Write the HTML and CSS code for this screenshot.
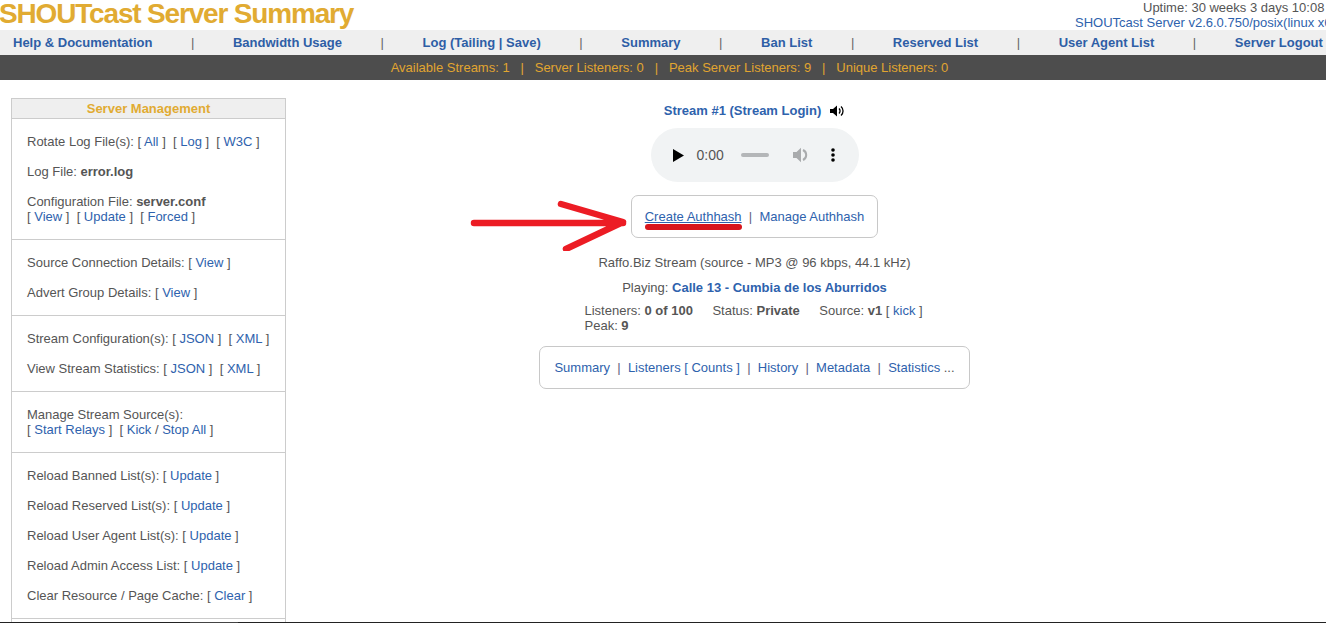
FILE: index.html
```html
<!DOCTYPE html>
<html lang="en">
<head>
<meta charset="utf-8">
<title>SHOUTcast Server Summary</title>
<link rel="stylesheet" href="styles.css">
</head>
<body>
<header class="top">
  <h1 class="title">SHOUTcast Server Summary</h1>
  <div class="meta">
    <div class="uptime">Uptime: 30 weeks 3 days 10:08</div>
    <div class="ver">SHOUTcast Server v2.6.0.750/posix(linux x64)</div>
  </div>
</header>
<nav class="nav">
  <a>Help &amp; Documentation</a><i>|</i>
  <a>Bandwidth Usage</a><i>|</i>
  <a>Log (Tailing | Save)</a><i>|</i>
  <a>Summary</a><i>|</i>
  <a>Ban List</a><i>|</i>
  <a>Reserved List</a><i>|</i>
  <a>User Agent List</a><i>|</i>
  <a>Server Logout</a>
</nav>
<div class="stats">Available Streams: 1 &nbsp;&nbsp;<b>|</b> &nbsp;&nbsp;Server Listeners: 0 &nbsp;&nbsp;<b>|</b> &nbsp;&nbsp;Peak Server Listeners: 9 &nbsp;&nbsp;<b>|</b> &nbsp;&nbsp;Unique Listeners: 0</div>
<div class="main">
  <aside class="side">
    <div class="side-head">Server Management</div>
    <section class="group">
      <p>Rotate Log File(s): [ <a>All</a> ] &nbsp;[ <a>Log</a> ] &nbsp;[ <a>W3C</a> ]</p>
      <p>Log File: <b>error.log</b></p>
      <p>Configuration File: <b>server.conf</b><br>[ <a>View</a> ] &nbsp;[ <a>Update</a> ] &nbsp;[ <a>Forced</a> ]</p>
    </section>
    <section class="group">
      <p>Source Connection Details: [ <a>View</a> ]</p>
      <p>Advert Group Details: [ <a>View</a> ]</p>
    </section>
    <section class="group">
      <p>Stream Configuration(s): [ <a>JSON</a> ] &nbsp;[ <a>XML</a> ]</p>
      <p>View Stream Statistics: [ <a>JSON</a> ] &nbsp;[ <a>XML</a> ]</p>
    </section>
    <section class="group">
      <p>Manage Stream Source(s):<br>[ <a>Start Relays</a> ] &nbsp;[ <a>Kick</a> / <a>Stop All</a> ]</p>
    </section>
    <section class="group">
      <p>Reload Banned List(s): [ <a>Update</a> ]</p>
      <p>Reload Reserved List(s): [ <a>Update</a> ]</p>
      <p>Reload User Agent List(s): [ <a>Update</a> ]</p>
      <p>Reload Admin Access List: [ <a>Update</a> ]</p>
      <p>Clear Resource / Page Cache: [ <a>Clear</a> ]</p>
    </section>
  </aside>
  <main class="center">
    <div class="stream-title"><a>Stream #1 (Stream Login)</a>
      <svg class="spk" width="15" height="12" viewBox="0 0 15 12"><path d="M0 4h3l4-3.500v11L3 8H0z" fill="#000"/><path d="M9 3.500a3.500 3.500 0 0 1 0 5M11 1.500a6 6 0 0 1 0 9" fill="none" stroke="#000" stroke-width="1.300"/></svg>
    </div>
    <div class="player">
      <svg class="play" width="11" height="13" viewBox="0 0 11 13"><path d="M0 0l11 6.500L0 13z" fill="#000"/></svg>
      <span class="time">0:00</span>
      <span class="track"></span>
      <svg class="vol" width="16" height="16" viewBox="0 0 16 16"><path d="M0 5h3.500L8 .8v14.400L3.500 11H0z" fill="#a9abad"/><path d="M10 3a5.500 5.500 0 0 1 0 10" fill="none" stroke="#a9abad" stroke-width="2"/></svg>
      <svg class="dots" width="4" height="14" viewBox="0 0 4 14"><circle cx="2" cy="2" r="1.800"/><circle cx="2" cy="7" r="1.800"/><circle cx="2" cy="12" r="1.800"/></svg>
    </div>
    <div class="box auth-box">
      <span class="box-text"><a class="marked">Create Authhash</a> &nbsp;<i>|</i> &nbsp;<a>Manage Authhash</a></span>
      <svg class="arrow" width="160" height="60" viewBox="0 0 160 60"><path d="M4 32H153M91 13L153 31L96 58" fill="none" stroke="#ec1c24" stroke-width="6.500" stroke-linecap="round" stroke-linejoin="round"/></svg>
    </div>
    <p class="line1">Raffo.Biz Stream (source - MP3 @ 96 kbps, 44.1 kHz)</p>
    <p class="line2">Playing: <a class="strong">Calle 13 - Cumbia de los Aburridos</a></p>
    <div class="info">
      <div class="info-row"><span>Listeners: <b>0 of 100</b></span><span>Status: <b>Private</b></span><span>Source: <b>v1</b> [ <a>kick</a> ]</span></div>
      <div>Peak: <b>9</b></div>
    </div>
    <div class="box link-box">
      <span class="box-text"><a>Summary</a> &nbsp;<i>|</i> &nbsp;<a>Listeners [ Counts ]</a> &nbsp;<i>|</i> &nbsp;<a>History</a> &nbsp;<i>|</i> &nbsp;<a>Metadata</a> &nbsp;<i>|</i> &nbsp;<a>Statistics</a> ...</span>
    </div>
  </main>
</div>
<div class="baseline"></div>
</body>
</html>
```
FILE: styles.css
```css
html, body { margin: 0; padding: 0; height: 623px; overflow: hidden; }
body { position: relative; background: #fff; color: #555; font: 13px/15px "Liberation Sans", Arial, sans-serif; }
a { color: #2e62ad; }
i { font-style: normal; }
p { margin: 0; }

.top { display: flex; justify-content: space-between; height: 30px; }
.title { margin: 0 0 0 -1px; font: bold 28px/27px "Liberation Sans", Arial, sans-serif; letter-spacing: -1.17px; color: #e1ab32; white-space: nowrap; }
.meta { width: 251px; flex: none; white-space: nowrap; overflow: hidden; }
.uptime { padding-left: 68px; }
.ver { color: #2e62ad; }

.nav { display: flex; justify-content: space-between; align-items: center; height: 25px; padding: 0 3px 0 13px; background: #efefef; font-weight: bold; }
.nav a { color: #2e5ea6; }
.nav i { color: #666; font-weight: normal; }

.stats { height: 25px; line-height: 25px; padding-left: 13px; background: #4d4d4d; color: #e1a530; text-align: center; }
.stats b { font-weight: normal; }

.main { display: flex; }
.side { flex: none; width: 273px; margin: 18px 0 0 11px; border: 1px solid #ccc; border-bottom: 0; height: 525px; box-sizing: content-box; }
.side-head { height: 19px; line-height: 19px; background: #efefef; border-bottom: 1px solid #ccc; text-align: center; font-weight: bold; color: #e1ab32; }
.group { padding: 15px; border-bottom: 1px solid #ccc; }
.group p + p { margin-top: 15px; }

.center { flex: 1; display: flex; flex-direction: column; align-items: center; padding-top: 23px; margin-right: 103px; }
.stream-title { display: flex; align-items: center; gap: 9px; font-weight: bold; height: 15px; }
.player { display: flex; align-items: center; width: 208px; height: 54px; margin-top: 10px; background: #f1f3f4; border-radius: 27px; box-sizing: border-box; padding-left: 22px; }
.time { margin-left: 13px; font-size: 14px; }
.track { width: 28px; height: 4px; margin-left: 17px; background: #b4b6b8; border-radius: 2px; }
.vol { margin-left: 24px; }
.dots { margin-left: 22px; }

.box { border: 1px solid #c8c8c8; border-radius: 7px; box-sizing: border-box; display: flex; align-items: center; justify-content: center; white-space: nowrap; }
.box i { color: #5f5f80; }
.auth-box { position: relative; width: 247px; height: 43px; margin-top: 13px; }
.marked { position: relative; text-decoration: underline; }
.marked::after { content: ""; position: absolute; left: 0; right: 0; bottom: -6px; height: 6px; border-radius: 3px; background: #d8151c; }
.arrow { position: absolute; left: -162px; top: -5px; }
.line1 { margin-top: 17px; }
.line2 { margin-top: 10px; }
.strong { font-weight: bold; }
.info { width: 340px; margin-top: 8px; }
.info-row { white-space: nowrap; }
.info-row span { margin-right: 19.500px; }
.link-box { width: 431px; height: 43px; margin-top: 13px; }

.baseline { position: absolute; left: 0; right: 0; bottom: 0; height: 1px; background: #222; }
.baseline::after { content: ""; position: absolute; left: 190px; width: 48px; height: 1px; background: #444; }
```
